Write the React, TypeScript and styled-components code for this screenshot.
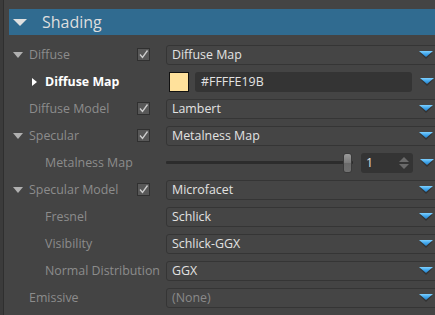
import React from "react";
import styled, { createGlobalStyle } from "styled-components";

const Global = createGlobalStyle`
  html, body { margin: 0; padding: 0; background: #444444; }
  body { font-family: "Open Sans", "Noto Sans", sans-serif; }
`;

const Panel = styled.div`
  width: 435px;
  height: 315px;
  overflow: hidden;
  background: #444444;
  box-sizing: border-box;
  border-left: 3px solid #3b3b3b;
  box-shadow: inset 1px 0 0 #2f2f2f;
  padding-top: 9px;
  padding-left: 6px;
`;

const Header = styled.div`
  height: 26px;
  background: #306b90;
  display: flex;
  align-items: center;
  color: #dedede;
  font-size: 16px;
  padding-left: 4px;
  gap: 15px;
`;

const HeaderArrow = styled.span`
  width: 0;
  height: 0;
  border-left: 7px solid transparent;
  border-right: 7px solid transparent;
  border-top: 7px solid #e0e0e0;
  margin-top: 1px;
`;

const Rows = styled.div`
  margin-top: 6px;
  margin-left: -9px;
`;

const Row = styled.div`
  height: 27px;
  display: grid;
  grid-template-columns: 137px 29px 1fr;
  align-items: center;
`;

const Label = styled.div<{ $indent: number; $strong?: boolean }>`
  display: flex;
  align-items: center;
  padding-left: ${(p) => p.$indent}px;
  font-size: 12.4px;
  color: ${(p) => (p.$strong ? "#ffffff" : "#8c8c8c")};
  font-weight: ${(p) => (p.$strong ? 700 : 400)};
  white-space: nowrap;
`;

const Down = styled.span`
  width: 0;
  height: 0;
  border-left: 5px solid transparent;
  border-right: 5px solid transparent;
  border-top: 6px solid #b0b0b0;
  margin-left: 13px;
  margin-right: 6px;
`;

const Right = styled.span`
  width: 0;
  height: 0;
  border-top: 4px solid transparent;
  border-bottom: 4px solid transparent;
  border-left: 5px solid #ffffff;
  margin-left: 32px;
  margin-right: 8px;
`;

const Check = styled.div`
  width: 11px;
  height: 11px;
  border: 1px solid #303030;
  background: #585858;
  display: flex;
  align-items: center;
  justify-content: center;
`;

const Control = styled.div`
  display: flex;
  align-items: center;
  margin-right: -8px;
  height: 20px;
`;

const Select = styled.div<{ $disabled?: boolean }>`
  flex: 1;
  height: 18px;
  border: 1px solid #353535;
  border-radius: 3px;
  background: #454545;
  display: flex;
  align-items: center;
  padding-left: 5px;
  padding-right: 6px;
  font-size: 12.4px;
  color: ${(p) => (p.$disabled ? "#8a8a8a" : "#e2e2e2")};
`;

const SelectText = styled.span`
  flex: 1;
`;

const BlueArrowBox = styled.span`
  width: 16px;
  display: flex;
  justify-content: center;
  margin-right: 2px;
`;

const Swatch = styled.div`
  width: 18px;
  height: 18px;
  border: 1px solid #111;
  background: #ffe19b;
  margin-left: 3px;
  margin-right: 6px;
`;

const TextField = styled.div`
  width: 217px;
  height: 20px;
  border-radius: 3px;
  background: #343434;
  display: flex;
  align-items: center;
  padding-left: 6px;
  font-size: 12.4px;
  color: #e2e2e2;
  box-sizing: border-box;
`;

const Spacer = styled.div`
  flex: 1;
  display: flex;
  justify-content: flex-end;
  padding-right: 6px;
`;

const Slider = styled.div`
  width: 187px;
  position: relative;
  height: 20px;
  display: flex;
  align-items: center;
`;

const Track = styled.div`
  width: 100%;
  height: 3px;
  background: #2c2c2c;
  border-radius: 1px;
`;

const Thumb = styled.div`
  position: absolute;
  left: 177px;
  top: 0;
  width: 9px;
  height: 20px;
  border-radius: 3px;
  background: linear-gradient(#9a9a9a, #7a7a7a 50%, #6a6a6a 51%, #707070);
  border: 1px solid #3a3a3a;
  box-sizing: border-box;
`;

const Spin = styled.div`
  margin-left: 8px;
  width: 52px;
  height: 20px;
  border-radius: 3px;
  background: #343434;
  display: flex;
  align-items: center;
  padding-left: 5px;
  padding-right: 4px;
  box-sizing: border-box;
  font-size: 12.4px;
  color: #e2e2e2;
`;

const SpinValue = styled.span`
  flex: 1;
`;

const SpinArrows = styled.span`
  display: flex;
  flex-direction: column;
  gap: 2px;
`;

const Tri = styled.span<{ $up?: boolean }>`
  width: 0;
  height: 0;
  border-left: 5px solid transparent;
  border-right: 5px solid transparent;
  ${(p) => (p.$up ? "border-bottom" : "border-top")}: 5px solid #6a6a6a;
`;

const BlueArrow = () => (
  <svg width="14" height="8" viewBox="0 0 14 8">
    <defs>
      <linearGradient id="ba" x1="0" y1="0" x2="0" y2="1">
        <stop offset="0" stopColor="#7fd0ff" />
        <stop offset="0.5" stopColor="#3fa6ec" />
        <stop offset="1" stopColor="#2a7fc4" />
      </linearGradient>
    </defs>
    <polygon points="1,2 13,2 7,8" fill="#262626" opacity="0.6" />
    <polygon points="0,0 14,0 7,6" fill="url(#ba)" />
  </svg>
);

const CheckMark = () => (
  <svg width="11" height="11" viewBox="0 0 11 11">
    <path d="M2 5.5 L4.5 8.5 L9.5 1.5" stroke="#cfcfcf" strokeWidth="1.3" fill="none" />
  </svg>
);

type RowDef = {
  label: string;
  indent: "tri" | "sub" | "plain" | "expand";
  strong?: boolean;
  check?: boolean;
  kind: "select" | "color" | "slider";
  value?: string;
  disabled?: boolean;
};

const rows: RowDef[] = [
  { label: "Diffuse", indent: "tri", check: true, kind: "select", value: "Diffuse Map" },
  { label: "Diffuse Map", indent: "expand", strong: true, kind: "color" },
  { label: "Diffuse Model", indent: "plain", check: true, kind: "select", value: "Lambert" },
  { label: "Specular", indent: "tri", check: true, kind: "select", value: "Metalness Map" },
  { label: "Metalness Map", indent: "sub", kind: "slider" },
  { label: "Specular Model", indent: "tri", check: true, kind: "select", value: "Microfacet" },
  { label: "Fresnel", indent: "sub", kind: "select", value: "Schlick" },
  { label: "Visibility", indent: "sub", kind: "select", value: "Schlick-GGX" },
  { label: "Normal Distribution", indent: "sub", kind: "select", value: "GGX" },
  { label: "Emissive", indent: "plain", kind: "select", value: "(None)", disabled: true },
];

const renderLabel = (r: RowDef) => {
  if (r.indent === "tri")
    return (
      <Label $indent={0}>
        <Down />
        {r.label}
      </Label>
    );
  if (r.indent === "expand")
    return (
      <Label $indent={0} $strong>
        <Right />
        {r.label}
      </Label>
    );
  return <Label $indent={r.indent === "sub" ? 45 : 29}>{r.label}</Label>;
};

const renderControl = (r: RowDef) => {
  if (r.kind === "color")
    return (
      <Control>
        <Swatch />
        <TextField>#FFFFE19B</TextField>
        <Spacer>
          <BlueArrowBox>
            <BlueArrow />
          </BlueArrowBox>
        </Spacer>
      </Control>
    );
  if (r.kind === "slider")
    return (
      <Control>
        <Slider>
          <Track />
          <Thumb />
        </Slider>
        <Spin>
          <SpinValue>1</SpinValue>
          <SpinArrows>
            <Tri $up />
            <Tri />
          </SpinArrows>
        </Spin>
        <Spacer>
          <BlueArrowBox>
            <BlueArrow />
          </BlueArrowBox>
        </Spacer>
      </Control>
    );
  return (
    <Control>
      <Select $disabled={r.disabled}>
        <SelectText>{r.value}</SelectText>
        <BlueArrowBox>
          <BlueArrow />
        </BlueArrowBox>
      </Select>
    </Control>
  );
};

export default function App() {
  return (
    <>
      <Global />
      <Panel>
        <Header>
          <HeaderArrow />
          Shading
        </Header>
        <Rows>
          {rows.map((r) => (
            <Row key={r.label}>
              {renderLabel(r)}
              <div>
                {r.check && (
                  <Check>
                    <CheckMark />
                  </Check>
                )}
              </div>
              {renderControl(r)}
            </Row>
          ))}
        </Rows>
      </Panel>
    </>
  );
}
